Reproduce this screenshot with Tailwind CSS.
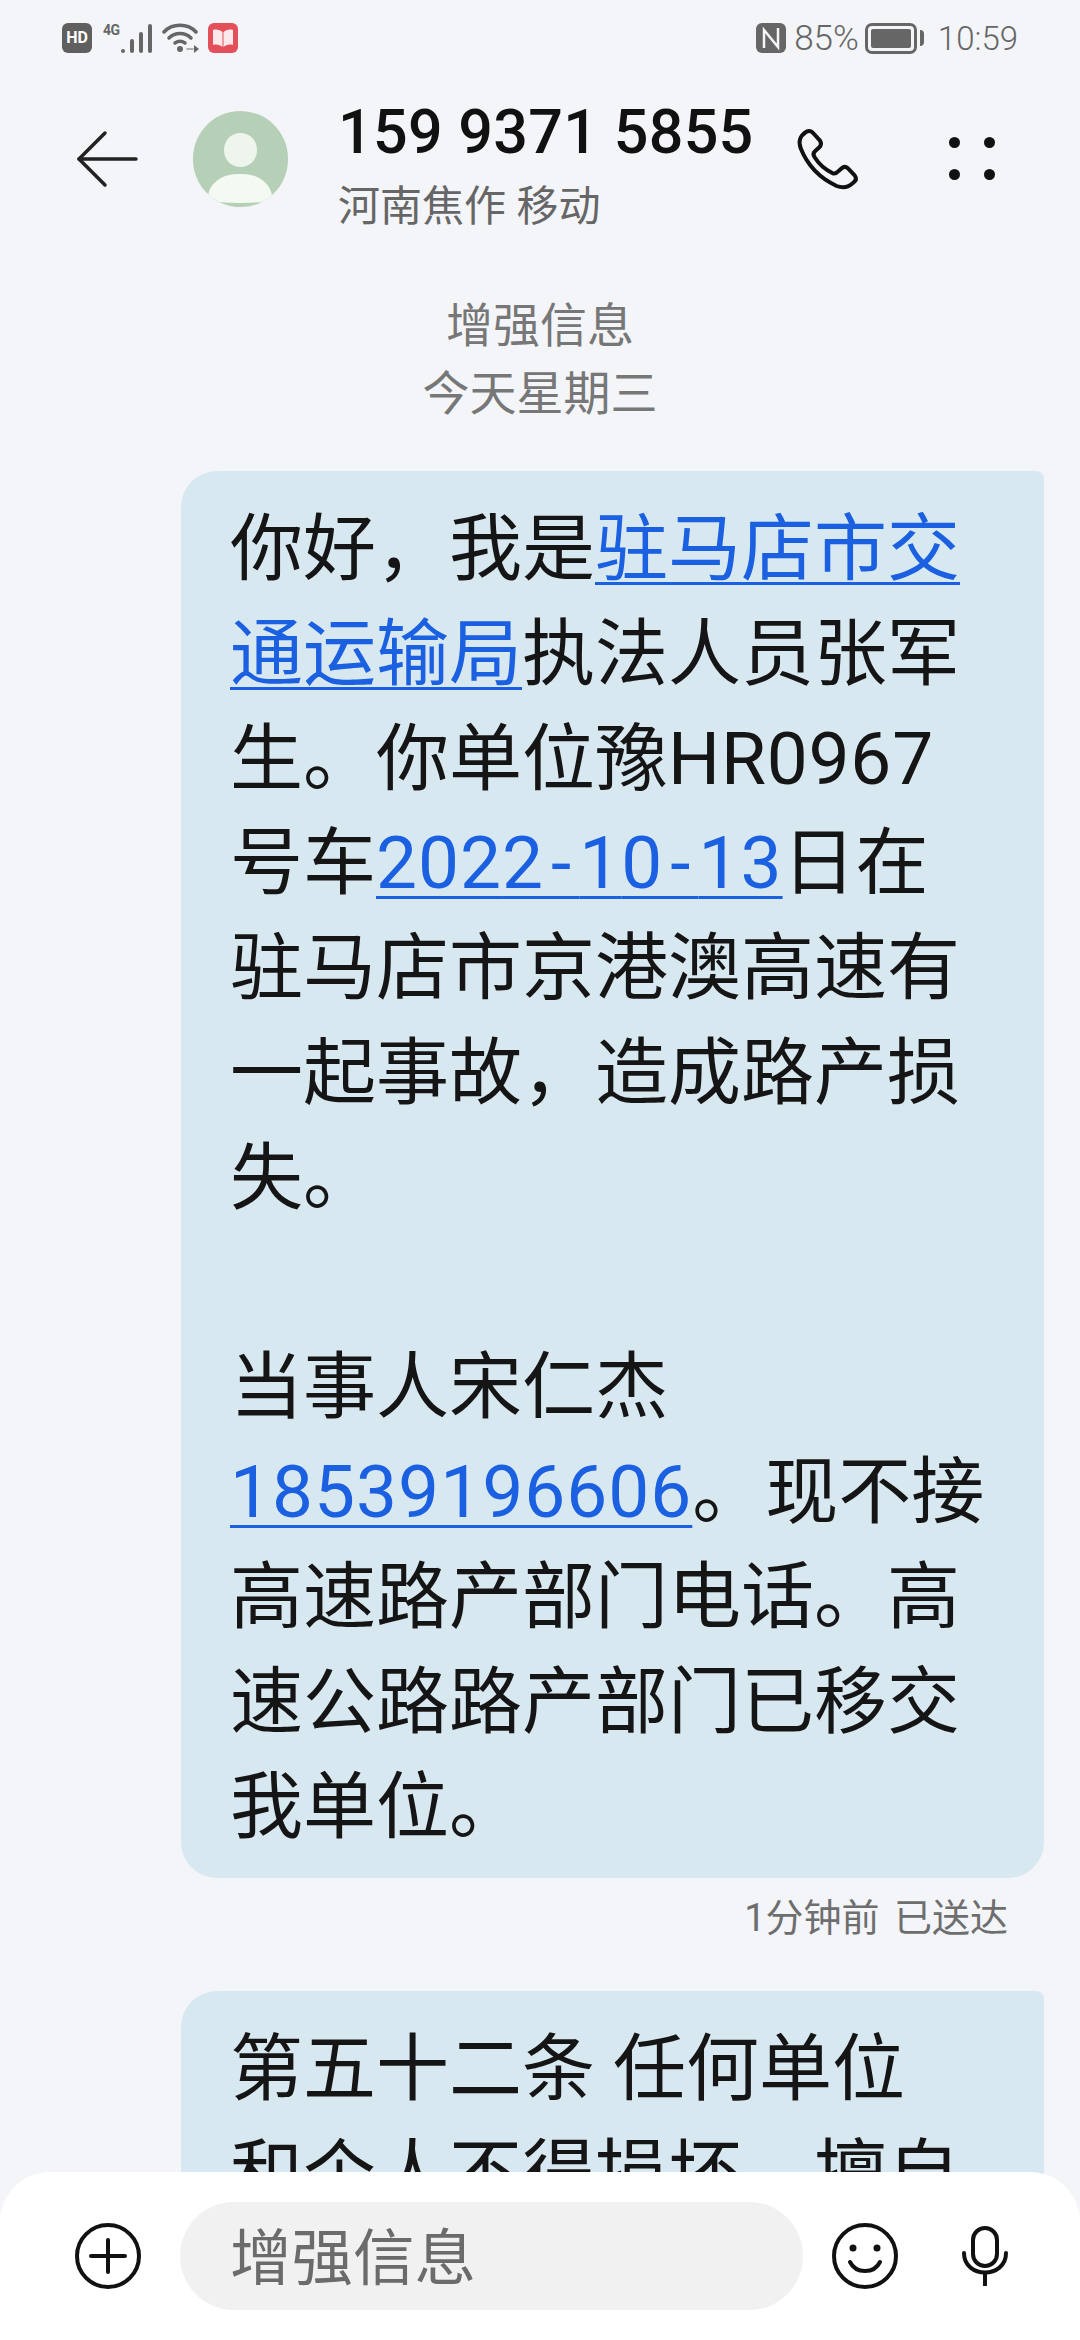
<!DOCTYPE html>
<html lang="zh-CN">
<head>
<meta charset="UTF-8" />
<title>159 9371 5855</title>
<script src="https://cdn.jsdelivr.net/npm/@tailwindcss/browser@4"></script>
</head>
<body class="bg-[#f3f5f8] font-['Roboto','Noto_Sans_CJK_SC',sans-serif]">
<div class="relative w-[1080px] h-[2340px] overflow-hidden">

  <!-- status bar -->
  <div class="flex items-center justify-between h-[76px] pl-[62px] pr-[62px] text-[#666] text-[33px]">
    <div class="flex items-center">
      <div class="w-[30px] h-[30px] rounded-[6px] bg-[#5f5f5f] text-white text-[16px] leading-[30px] font-bold text-center">HD</div>
      <div class="ml-[11px] flex h-[30px]">
        <span class="w-[18px] text-[14px] leading-[14px] font-bold tracking-[-0.5px]">4G</span>
        <svg width="32" height="30" viewBox="0 0 32 30" fill="#666"><rect y="26" width="4" height="4" rx="2"/><rect x="9" y="16" width="4" height="14" rx="2"/><rect x="18" y="9" width="4" height="21" rx="2"/><rect x="27" y="1" width="4" height="29" rx="2"/></svg>
      </div>
      <svg class="ml-[9px]" width="38" height="30" viewBox="0 0 38 30" fill="none" stroke="#666" stroke-width="3.500" stroke-linecap="round"><path d="M2 9c8-9 24-9 32 0"/><path d="M7 15c6-6 16-6 22 0"/><path d="M13 20c3-2 7-2 10 0"/><circle cx="18" cy="26" r="3" fill="#666" stroke="none"/><path d="M25 26h6" stroke-width="1.500" stroke="#999"/><path d="M32 22l5 4-5 4z" fill="#666" stroke="none"/></svg>
      <svg class="ml-[8px]" width="30" height="30" viewBox="0 0 30 30"><rect width="30" height="30" rx="6" fill="#e4505a"/><path d="M5 7c4-1 7 0 9.500 2v15C12 22 9 21 5 22z M25 7c-4-1-7 0-9.500 2v15c2.500-2 5.500-3 9.500-2z" fill="#fde8ea"/></svg>
    </div>
    <div class="flex items-center">
      <svg width="30" height="30" viewBox="0 0 30 30"><rect width="30" height="30" rx="6" fill="#666"/><path d="M8 25V7l14 17V5" fill="none" stroke="#f3f5f8" stroke-width="2.500"/></svg>
      <span class="ml-[8px] leading-none font-light text-[35px]">85%</span>
      <div class="ml-[6px] w-[52px] h-[31px] rounded-[7px] border-[3px] border-[#666] p-[3px]"><div class="w-full h-full bg-[#666] rounded-[2px]"></div></div>
      <div class="ml-[3px] w-[4px] h-[16px] rounded-r bg-[#666]"></div>
      <span class="ml-[14px] leading-none font-light">10:59</span>
    </div>
  </div>

  <!-- header -->
  <div class="flex items-start h-[130px] mt-[18px]">
    <svg class="ml-[76px] mt-[36px] shrink-0" width="62" height="58" viewBox="0 0 62 58" fill="none" stroke="#222" stroke-width="3.500" stroke-linecap="round" stroke-linejoin="round"><path d="M29 3 3 29l26 26"/><path d="M3 29h57"/></svg>
    <div class="relative ml-[55px] mt-[17px] w-[95px] h-[96px] rounded-full bg-[#b6d0b7] overflow-hidden shrink-0">
      <div class="absolute left-[31px] top-[22px] w-[33px] h-[34px] rounded-full bg-[#eef5ec]"></div>
      <div class="absolute left-[15px] top-[63px] w-[64px] h-[29px] rounded-t-[32px_26px] rounded-b-[32px_6px] bg-[#f4f9f2]"></div>
    </div>
    <div class="ml-[50px] w-[420px] pt-[3px]">
      <div class="text-[61px] leading-[70px] font-medium tracking-[0.3px] text-[#111] whitespace-nowrap">159 9371 5855</div>
      <div class="text-[42px] leading-[56px] text-[#666] mt-[12px] whitespace-nowrap">河南焦作 移动</div>
    </div>
    <svg class="ml-[12px] mt-[16px] shrink-0" width="100" height="90" viewBox="0 0 300 270" fill="none" stroke="#111" stroke-width="12" stroke-linejoin="round"><path d="M108 66C118 60 126 64 132 72L150 92C155 100 154 106 148 112L135 124C128 130 130 136 134 142C148 165 168 180 188 190C196 192 200 190 205 184L216 174C222 168 228 170 234 175L254 196C260 204 258 212 250 218C236 232 220 236 200 228C150 205 112 165 92 115C84 92 90 78 108 66Z"/></svg>
    <div class="ml-[79px] mt-[43px] grid grid-cols-2 gap-x-[24px] gap-y-[21px] shrink-0">
      <div class="w-[11px] h-[11px] rounded-full bg-[#111]"></div>
      <div class="w-[11px] h-[11px] rounded-full bg-[#111]"></div>
      <div class="w-[11px] h-[11px] rounded-full bg-[#111]"></div>
      <div class="w-[11px] h-[11px] rounded-full bg-[#111]"></div>
    </div>
  </div>

  <!-- system text -->
  <div class="mt-[68px] text-center text-[#777] text-[47px] leading-[68px]">
    <div>增强信息</div>
    <div>今天星期三</div>
  </div>

  <!-- first message -->
  <div class="ml-[181px] w-[863px] mt-[43px] bg-[#d8e8f1] rounded-[36px] rounded-tr-[8px] pl-[49px] pt-[26px] pb-[19px] text-[73px] leading-[104.8px] text-[#151515] whitespace-nowrap">
    你好，我是<a class="text-[#1a60e0] underline decoration-[3px] underline-offset-[8px]">驻马店市交<br>通运输局</a>执法人员张军<br>
    生。你单位豫<span class="tracking-[0.8px]">HR0967</span><br>
    号车<a class="text-[#1a60e0] underline decoration-[3px] underline-offset-[8px] tracking-[1px]">202<span class="tracking-[8px]">2-</span>1<span class="tracking-[8px]">0-</span>13</a>日在<br>
    驻马店市京港澳高速有<br>
    一起事故，造成路产损<br>
    失。<br>
    <br>
    当事人宋仁杰<br>
    <a class="text-[#1a60e0] underline decoration-[3px] underline-offset-[8px] tracking-[1px]">18539196606</a>。现不接<br>
    高速路产部门电话。高<br>
    速公路路产部门已移交<br>
    我单位。
  </div>
  <div class="mt-[15px] pr-[72px] text-right text-[38px] leading-[50px] text-[#6e6e6e] [word-spacing:5px]">1分钟前 已送达</div>

  <!-- second message, runs under the input bar -->
  <div class="ml-[181px] w-[863px] mt-[48px] bg-[#d8e8f1] rounded-t-[36px] rounded-tr-[8px] pl-[49px] pt-[26px] pb-[18px] text-[73px] leading-[104.8px] text-[#151515] whitespace-nowrap">
    第五十二条 任何单位<br>
    和个人不得损坏、擅自
  </div>

  <!-- input bar -->
  <div class="absolute left-0 right-0 bottom-0 h-[168px] bg-white rounded-t-[50px] flex items-start pt-[30px]">
    <svg class="ml-[75px] mt-[21px] shrink-0" width="66" height="66" viewBox="0 0 66 66" fill="none" stroke="#111" stroke-width="4" stroke-linecap="round"><circle cx="33" cy="33" r="31"/><path d="M33 17v32M16 33h34"/></svg>
    <div class="ml-[39px] w-[623px] h-[108px] rounded-full bg-[#f1f1f1] pl-[50px] pt-[6px] flex items-center text-[61.500px] text-[#6b6b6b] shrink-0">增强信息</div>
    <svg class="ml-[29px] mt-[21px] shrink-0" width="66" height="66" viewBox="0 0 66 66" fill="none" stroke="#111" stroke-width="4" stroke-linecap="round"><circle cx="33" cy="33" r="31"/><circle cx="21" cy="25" r="3.500" fill="#111" stroke="none"/><circle cx="45" cy="25" r="3.500" fill="#111" stroke="none"/><path d="M18 39c6 12 24 12 30 0"/></svg>
    <svg class="ml-[64px] mt-[24px] shrink-0" width="46" height="60" viewBox="0 0 46 60" fill="none" stroke="#111" stroke-width="4" stroke-linecap="round"><rect x="11" y="2" width="24" height="38" rx="12"/><path d="M2 27c0 26 42 26 42 0"/><path d="M23 47v12"/></svg>
  </div>
</div>
</body>
</html>
